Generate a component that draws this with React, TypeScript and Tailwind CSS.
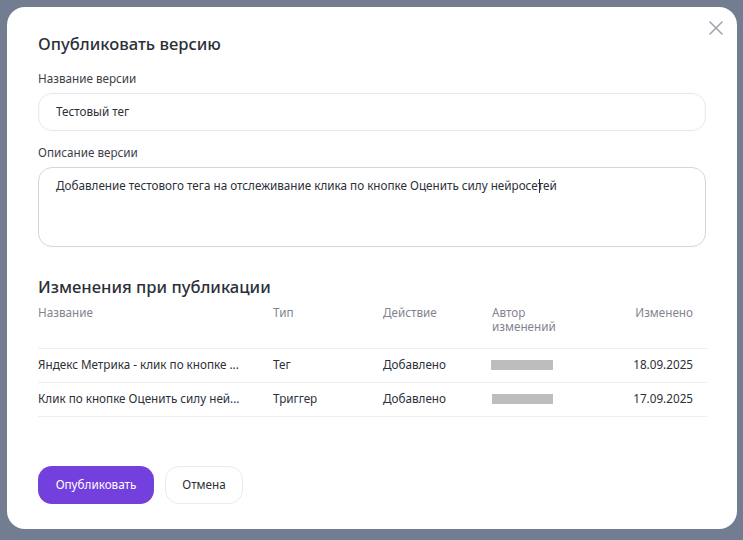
import React from "react";

const rows = [
  { name: "Яндекс Метрика - клик по кнопке ...", type: "Тег", date: "18.09.2025", barX: "ml-[-1px] w-[62px]" },
  { name: "Клик по кнопке Оценить силу ней...", type: "Триггер", date: "17.09.2025", barX: "w-[61px]" },
];

export default function App() {
  return (
    <div className="h-[540px] w-[743px] overflow-hidden bg-[#737d92] p-[7px] font-['Noto_Sans','Open_Sans',sans-serif] text-[#2b2f38]">
      <div className="relative flex h-[522px] w-[730px] flex-col rounded-[18px] bg-white pl-[31px] pr-[30px]">
        <button className="absolute right-[13px] top-[13px] text-[#9ea3ad]" aria-label="Закрыть">
          <svg width="16" height="16" viewBox="0 0 16 16" fill="none" stroke="currentColor" strokeWidth="1.5">
            <path d="M1.5 1.5 14.5 14.5M14.5 1.5 1.5 14.5" />
          </svg>
        </button>

        <h1 className="mt-[26px] text-[16.6px] font-medium leading-[22px] text-[#2b2f38]">Опубликовать версию</h1>

        <label className="mt-[15px] block text-[11.7px] leading-[16px] text-[#3b3f48]">Название версии</label>
        <div className="mt-[7px] flex h-[38px] w-[668px] items-center rounded-[14px] border border-[#e6e7ea] px-[17px] text-[11.7px] text-[#2b2f38]">
          Тестовый тег
        </div>

        <label className="mt-[13px] block text-[11.7px] leading-[16px] text-[#3b3f48]">Описание версии</label>
        <div className="mt-[7px] h-[80px] w-[668px] rounded-[14px] border border-[#d5d6da] px-[17px] pt-[8px] text-[11.7px] leading-[18px] text-[#2b2f38]">
          Добавление тестового тега на отслеживание клика по кнопке Оценить силу нейросе
          <span className="mx-[-0.5px] inline-block h-[14px] w-px translate-x-[2px] translate-y-[3px] bg-[#2b2f38]" />
          тей
        </div>

        <h2 className="mt-[29px] text-[16.6px] font-medium leading-[22px] text-[#2b2f38]">Изменения при публикации</h2>

        <div className="mt-[4px] w-[669px]">
          <div className="grid h-[47px] grid-cols-[235px_110px_109px_1fr_86px] border-b border-[#eeeff1] text-[11.7px] leading-[14px] text-[#7f8490]">
            <div className="pt-[3px]">Название</div>
            <div className="pt-[3px]">Тип</div>
            <div className="pt-[3px]">Действие</div>
            <div className="pt-[3px]">Автор<br />изменений</div>
            <div className="pr-[14px] pt-[3px] text-right">Изменено</div>
          </div>
          {rows.map((r) => (
            <div key={r.date} className="grid h-[34px] grid-cols-[235px_110px_109px_1fr_86px] items-center border-b border-[#eeeff1] pb-[1px] text-[11.7px] text-[#2b2f38]">
              <div className="truncate">{r.name}</div>
              <div>{r.type}</div>
              <div>Добавлено</div>
              <div><div className={`h-[10px] bg-[#bdbdbd] ${r.barX}`} /></div>
              <div className="pr-[14px] text-right">{r.date}</div>
            </div>
          ))}
        </div>

        <div className="mt-[49px] flex gap-[11px]">
          <button className="h-[38px] w-[116px] rounded-[14px] bg-[#7440dd] text-[11.7px] text-white">Опубликовать</button>
          <button className="h-[38px] w-[78px] rounded-[14px] border border-[#e9eaec] bg-white text-[11.7px] text-[#2b2f38]">Отмена</button>
        </div>
      </div>
    </div>
  );
}
